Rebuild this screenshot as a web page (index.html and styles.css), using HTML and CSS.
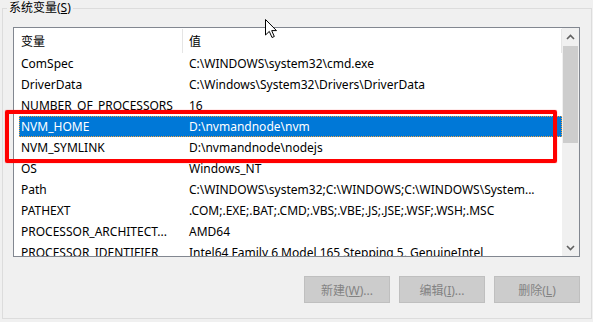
FILE: index.html
```html
<!DOCTYPE html>
<html>
<head>
  <title>系统变量</title>
  <link rel="stylesheet" href="styles.css">
</head>
<body>

  <div class="window">
    <fieldset class="group">
      <legend>系统变量(<u>S</u>)</legend>

      <div class="listbox">
        <div class="list">
          <div class="list-head">
            <div class="col-name">变量</div>
            <div class="col-value">值</div>
          </div>
          <div class="row"><div class="col-name">ComSpec</div><div class="col-value">C:\WINDOWS\system32\cmd.exe</div></div>
          <div class="row"><div class="col-name">DriverData</div><div class="col-value">C:\Windows\System32\Drivers\DriverData</div></div>
          <div class="row"><div class="col-name">NUMBER_OF_PROCESSORS</div><div class="col-value">16</div></div>
          <div class="row selected"><div class="col-name">NVM_HOME</div><div class="col-value">D:\nvmandnode\nvm</div></div>
          <div class="row"><div class="col-name">NVM_SYMLINK</div><div class="col-value">D:\nvmandnode\nodejs</div></div>
          <div class="row"><div class="col-name">OS</div><div class="col-value">Windows_NT</div></div>
          <div class="row"><div class="col-name">Path</div><div class="col-value">C:\WINDOWS\system32;C:\WINDOWS;C:\WINDOWS\System...</div></div>
          <div class="row"><div class="col-name">PATHEXT</div><div class="col-value">.COM;.EXE;.BAT;.CMD;.VBS;.VBE;.JS;.JSE;.WSF;.WSH;.MSC</div></div>
          <div class="row"><div class="col-name">PROCESSOR_ARCHITECT...</div><div class="col-value">AMD64</div></div>
          <div class="row"><div class="col-name">PROCESSOR_IDENTIFIER</div><div class="col-value">Intel64 Family 6 Model 165 Stepping 5, GenuineIntel</div></div>
        </div>

        <!-- fake vertical scrollbar -->
        <div class="scrollbar">
          <div class="arrow">
            <svg width="9" height="6" viewBox="0 0 9 6"><polyline points="1,5 4.5,1.5 8,5" fill="none" stroke="#606060" stroke-width="1.6"/></svg>
          </div>
          <div class="thumb"></div>
          <div class="track"></div>
          <div class="arrow">
            <svg width="9" height="6" viewBox="0 0 9 6"><polyline points="1,1 4.5,4.5 8,1" fill="none" stroke="#606060" stroke-width="1.6"/></svg>
          </div>
        </div>
      </div>

      <div class="buttons">
        <button class="btn" disabled>新建(<u>W</u>)...</button>
        <button class="btn" disabled>编辑(<u>I</u>)...</button>
        <button class="btn" disabled>删除(<u>L</u>)</button>
      </div>
    </fieldset>

    <!-- annotation drawn over the list -->
    <div class="mark"></div>

    <svg class="cursor" width="13" height="20" viewBox="0 0 13 20">
      <path d="M0.5,0.5 L0.5,16 L4.3,12.4 L7,18.5 L9.3,17.5 L6.7,11.6 L11.5,11.6 Z" fill="#fff" stroke="#000" stroke-width="1" stroke-linejoin="round"/>
    </svg>
  </div>

</body>
</html>
```

FILE: styles.css
```css
body {
  margin: 0;
  background: #f0f0f0;
  font-family: "Noto Sans", "Noto Sans CJK SC", sans-serif;
  font-size: 12px;
  color: #000;
}

.window {
  position: relative;
  width: 593px;
  height: 322px;
  overflow: hidden;
}

.group {
  margin: 0 1px 0 2px;
  padding: 11px 11px 15px 10px;
  border: 1px solid #dcdcdc;
}

.group legend {
  margin-left: -6px;
  padding: 0 2px;
  line-height: 16px;
}

.listbox {
  display: flex;
  height: 228px;
  border: 1px solid #828790;
  background: white;
}

.list {
  flex: 1;
  overflow: hidden;
}

.list-head {
  display: flex;
  height: 25px;
  align-items: center;
  padding-left: 5px;
}

.list-head .col-value {
  align-self: stretch;
  display: flex;
  align-items: center;
  border-left: 1px solid #e5e5e5;
  border-right: 1px solid #e5e5e5;
  margin: 1px 0 0 0;
  padding-left: 6px;
}

.row {
  display: flex;
  height: 21px;
  line-height: 21px;
  margin-left: 5px;
  white-space: nowrap;
}

.col-name {
  width: 161px;
  padding-left: 2px;
  overflow: hidden;
  white-space: nowrap;
}

.col-value {
  flex: 1;
  padding-left: 7px;
  overflow: hidden;
  white-space: nowrap;
}

.row.selected {
  background: #0078d7;
  color: white;
  outline: 1px dotted #f0a040;
  outline-offset: -1px;
}

.scrollbar {
  width: 17px;
  display: flex;
  flex-direction: column;
  background: #f0f0f0;
}

.scrollbar .arrow {
  height: 17px;
  display: flex;
  align-items: center;
  justify-content: center;
}

.scrollbar .thumb {
  height: 97px;
  margin: 1px 1px 0 1px;
  background: #cdcdcd;
}

.scrollbar .track {
  flex: 1;
}

.buttons {
  display: flex;
  justify-content: flex-end;
  gap: 9px;
  margin-top: 19px;
}

.btn {
  width: 86px;
  height: 27px;
  padding: 0;
  font-family: inherit;
  font-size: 12px;
  background: #cccccc;
  border: 1px solid #bfbfbf;
  color: #838383;
}

.mark {
  position: absolute;
  left: 5px;
  top: 110px;
  width: 544px;
  height: 45px;
  border: 4px solid #ff0000;
  border-radius: 2px;
  box-shadow: 0 0 1px #ff3030;
}

.cursor {
  position: absolute;
  left: 265px;
  top: 19px;
}
```
